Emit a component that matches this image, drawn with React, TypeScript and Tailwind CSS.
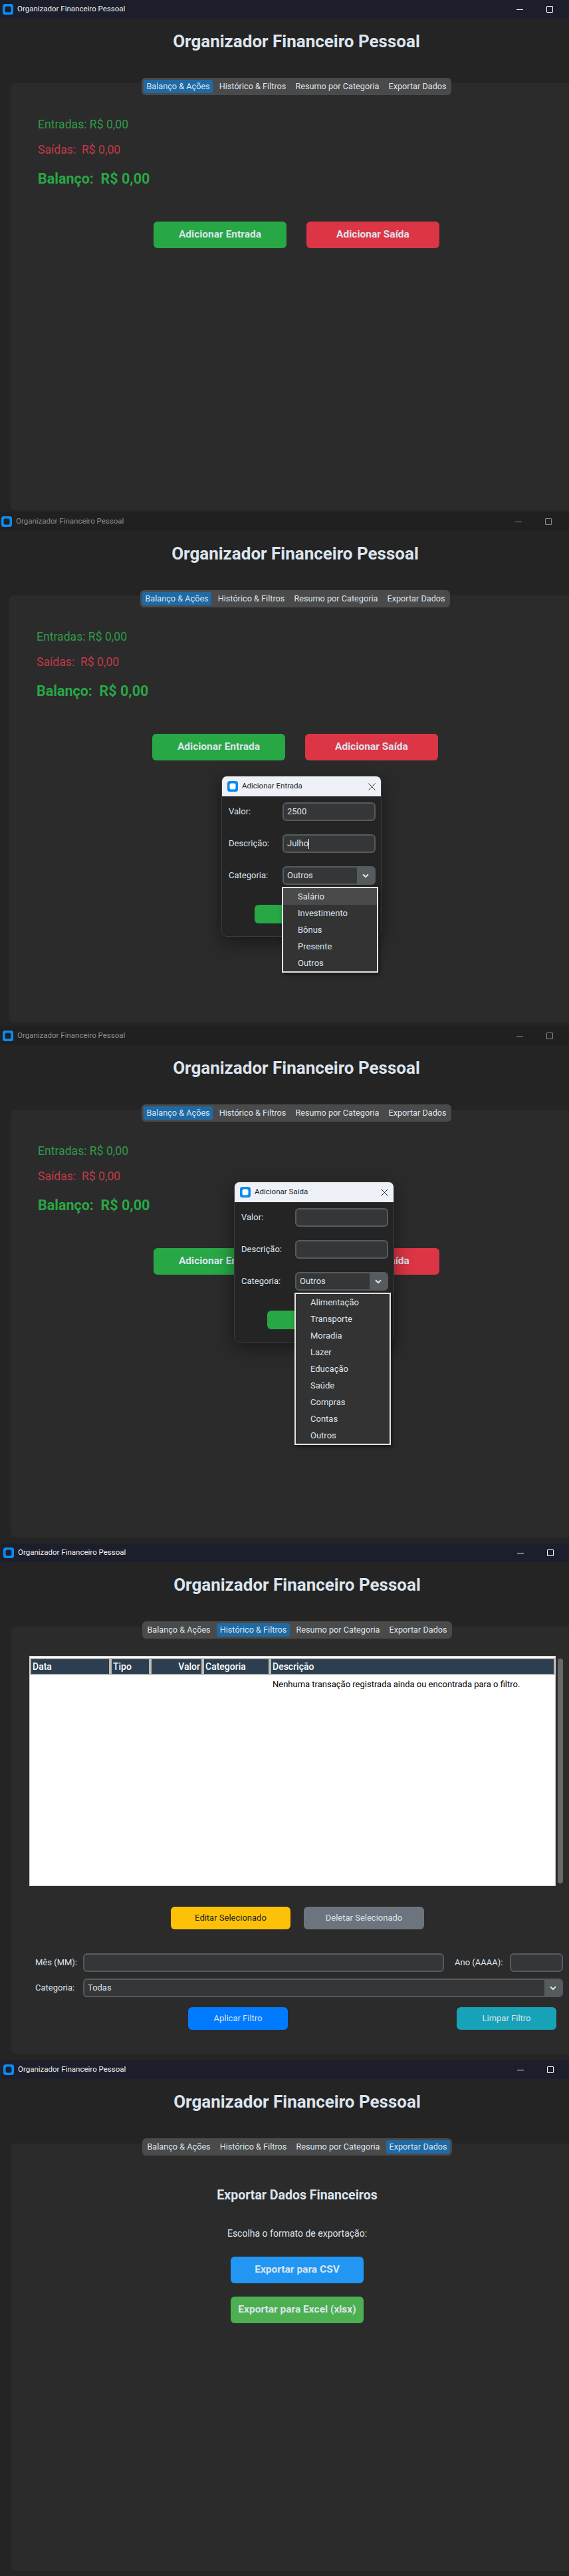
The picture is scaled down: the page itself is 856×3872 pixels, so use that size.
import type { ReactNode } from 'react';
import clsx from 'clsx';

const TABS = ['Balanço & Ações', 'Histórico & Filtros', 'Resumo por Categoria', 'Exportar Dados'];
const INCOME_CATEGORIES = ['Salário', 'Investimento', 'Bônus', 'Presente', 'Outros'];
const EXPENSE_CATEGORIES = [
  'Alimentação',
  'Transporte',
  'Moradia',
  'Lazer',
  'Educação',
  'Saúde',
  'Compras',
  'Contas',
  'Outros',
];
const COLUMNS = [
  { label: 'Data', className: '' },
  { label: 'Tipo', className: '' },
  { label: 'Valor', className: 'text-right' },
  { label: 'Categoria', className: '' },
  { label: 'Descrição', className: '' },
];

function AppIcon({ inner }: { inner: string }) {
  return (
    <svg width="16" height="16" viewBox="0 0 16 16" className="shrink-0" aria-hidden="true">
      <rect width="16" height="16" rx="3.5" fill="#0a8cf0" />
      <rect x="3.5" y="3.5" width="9" height="9" rx="2.5" fill={inner} />
    </svg>
  );
}

function TitleBar({ active }: { active: boolean }) {
  const stroke = active ? '#ffffff' : '#8a8a8a';
  return (
    <header
      className={clsx(
        'flex h-[28px] items-center pl-[4px] text-[11.5px]',
        active ? 'bg-[#1c1f2b] text-[#f2f2f2]' : 'bg-[#202020] text-[#8f8f8f]',
      )}
    >
      <AppIcon inner={active ? '#1c1f2b' : '#202020'} />
      <span className="ml-[6px]">Organizador Financeiro Pessoal</span>
      <svg width="10" height="10" viewBox="0 0 10 10" className="ml-auto" aria-hidden="true">
        <path d="M0 5.5h10" stroke={stroke} strokeWidth="1" />
      </svg>
      <svg width="10" height="10" viewBox="0 0 10 10" className="mr-[60px] ml-[35px]" aria-hidden="true">
        <rect x="0.5" y="0.5" width="9" height="9" rx="0.5" fill="none" stroke={stroke} strokeWidth="1" />
      </svg>
    </header>
  );
}

function Tabs({ active }: { active: number }) {
  return (
    <nav className="relative z-10 mx-auto mt-[39px] flex h-[26px] w-fit items-center gap-[5px] rounded-[6px] bg-[#4a4a4a] px-[3px] text-[12.7px]">
      {TABS.map((tab, index) => (
        <span
          key={tab}
          className={clsx(
            'flex h-[20px] items-center rounded-[3px] px-[4.5px]',
            index === active ? 'bg-[#1f6aa5]' : '',
          )}
        >
          {tab}
        </span>
      ))}
    </nav>
  );
}

function Screen({
  active,
  tab,
  className,
  overlay,
  children,
}: {
  active: boolean;
  tab: number;
  className: string;
  overlay?: ReactNode;
  children: ReactNode;
}) {
  return (
    <section className={clsx('relative w-[892px] shrink-0 bg-[#242424] text-[#dce4ee]', className)}>
      <TitleBar active={active} />
      <h1 className="mt-[18px] text-center text-[26px] leading-[32px] font-bold">Organizador Financeiro Pessoal</h1>
      <Tabs active={tab} />
      <main className="mx-[16px] -mt-[18px] h-[642px] rounded-[6px] bg-[#2b2b2b]">{children}</main>
      {overlay}
    </section>
  );
}

function Chevron() {
  return (
    <svg width="10" height="7" viewBox="0 0 10 7" aria-hidden="true">
      <path d="M1 1.2l4 3.8 4-3.8" fill="none" stroke="#dce4ee" strokeWidth="2" />
    </svg>
  );
}

function TextInput({ className, children }: { className: string; children?: ReactNode }) {
  return (
    <div
      className={clsx(
        'flex h-[28px] items-center rounded-[6px] border-2 border-[#565b5e] bg-[#343638] pl-[5px] text-[13px]',
        className,
      )}
    >
      {children}
    </div>
  );
}

function SelectBox({ value, className }: { value: string; className: string }) {
  return (
    <div
      className={clsx(
        'flex h-[28px] items-center overflow-hidden rounded-[6px] border-2 border-[#565b5e] bg-[#343638] text-[13px]',
        className,
      )}
    >
      <span className="flex-1 pl-[5px]">{value}</span>
      <span className="flex h-full w-[26px] items-center justify-center bg-[#565b5e]">
        <Chevron />
      </span>
    </div>
  );
}

function Field({ label, children }: { label: string; children: ReactNode }) {
  return (
    <div className="mb-[20px] flex h-[28px] items-center text-[13px]">
      <span className="w-[81px]">{label}</span>
      {children}
    </div>
  );
}

function Dialog({
  title,
  className,
  value,
  description,
  categories,
  highlight,
  menuLeft,
}: {
  title: string;
  className: string;
  value?: string;
  description?: string;
  categories: string[];
  highlight?: number;
  menuLeft: string;
}) {
  return (
    <div
      className={clsx(
        'absolute z-20 h-[242px] w-[241px] rounded-[8px] border border-[#3c3c3c] bg-[#242424] shadow-[0_8px_28px_rgba(0,0,0,0.45)]',
        className,
      )}
    >
      <div className="flex h-[30px] items-center rounded-t-[7px] bg-[#eff1f8] pl-[8px] text-[11.5px] text-[#222222]">
        <AppIcon inner="#ffffff" />
        <span className="ml-[6px] flex-1">{title}</span>
        <svg width="11" height="11" viewBox="0 0 11 11" className="mr-[8.5px]" aria-hidden="true">
          <path d="M0.5 0.5l10 10M10.5 0.5l-10 10" stroke="#222222" strokeWidth="1" />
        </svg>
      </div>
      <div className="pt-[9px] pl-[10px]">
        <Field label="Valor:">
          <TextInput className="w-[140px]">{value}</TextInput>
        </Field>
        <Field label="Descrição:">
          <TextInput className="w-[140px]">
            {description}
            {description ? <span className="h-[15px] w-px bg-white" /> : null}
          </TextInput>
        </Field>
        <Field label="Categoria:">
          <SelectBox value="Outros" className="w-[140px]" />
        </Field>
        <div className="mt-[30px] ml-[39px] h-[28px] w-[141px] rounded-[6px] bg-[#28a745]" />
      </div>
      <ul
        className={clsx(
          'absolute top-[166px] w-[145px] border-2 border-[#e4e4e4] bg-[#333333] text-[13px] shadow-[2px_3px_6px_rgba(0,0,0,0.5)]',
          menuLeft,
        )}
      >
        {categories.map((category, index) => (
          <li
            key={category}
            className={clsx('flex h-[25px] items-center pl-[22px]', index === highlight ? 'bg-[#4a4a4a]' : '')}
          >
            {category}
          </li>
        ))}
      </ul>
    </div>
  );
}

function BalancePanel() {
  return (
    <div className="pt-[50px]">
      <div className="pl-[41px]">
        <p className="text-[17.6px] leading-[24px] whitespace-pre text-[#2f9a4a]">Entradas: R$ 0,00</p>
        <p className="mt-[14px] text-[17.6px] leading-[24px] whitespace-pre text-[#c23a47]">Saídas:  R$ 0,00</p>
        <p className="mt-[17px] text-[21.5px] leading-[30px] font-bold whitespace-pre text-[#28a745]">Balanço:  R$ 0,00</p>
      </div>
      <div className="mt-[49px] flex justify-center gap-[30px]">
        <button className="h-[40px] w-[200px] rounded-[6px] bg-[#28a745] text-[15.5px] font-bold">Adicionar Entrada</button>
        <button className="h-[40px] w-[200px] rounded-[6px] bg-[#dc3545] text-[15.5px] font-bold">Adicionar Saída</button>
      </div>
    </div>
  );
}

function HistoryPanel() {
  return (
    <div className="pt-[44px] text-[13px]">
      <div className="ml-[27px] flex">
        <div className="h-[346px] w-[792px] border border-[#d4d0c8] bg-white pt-[2px]">
          <div className="grid grid-cols-[121px_60px_79px_101px_429px]">
            {COLUMNS.map((column) => (
              <div
                key={column.label}
                className={clsx(
                  'h-[26px] border-2 border-[#bdbdb5] bg-[#2c3e50] px-[2px] text-[14px] leading-[22px] font-medium text-white',
                  column.className,
                )}
              >
                {column.label}
              </div>
            ))}
            <div className="col-start-5 h-[28px] pl-[4px] leading-[28px] text-black">
              Nenhuma transação registrada ainda ou encontrada para o filtro.
            </div>
          </div>
        </div>
        <div className="mt-[4px] ml-[3px] h-[338px] w-[8px] rounded-full bg-[#696969]" />
      </div>

      <div className="mt-[31px] flex gap-[20px] pl-[240px]">
        <button className="h-[34px] w-[180px] rounded-[6px] bg-[#ffc107] text-[#212529]">Editar Selecionado</button>
        <button className="h-[34px] w-[181px] rounded-[6px] bg-[#6c757d]">Deletar Selecionado</button>
      </div>

      <div className="mt-[36px] ml-[36px] flex items-center">
        <span className="w-[72px]">Mês (MM):</span>
        <TextInput className="w-[543px]" />
        <span className="ml-[16px] w-[83px]">Ano (AAAA):</span>
        <TextInput className="w-[80px]" />
      </div>
      <div className="mt-[10px] ml-[36px] flex items-center">
        <span className="w-[72px]">Categoria:</span>
        <SelectBox value="Todas" className="w-[722px]" />
      </div>

      <div className="mt-[15px] ml-[266px] flex gap-[254px]">
        <button className="h-[34px] w-[150px] rounded-[6px] bg-[#007bff]">Aplicar Filtro</button>
        <button className="h-[34px] w-[150px] rounded-[6px] bg-[#17a2b8]">Limpar Filtro</button>
      </div>
    </div>
  );
}

function ExportPanel() {
  return (
    <div className="flex flex-col items-center pt-[64px]">
      <h2 className="text-[19.5px] leading-[28px] font-bold">Exportar Dados Financeiros</h2>
      <p className="mt-[33px] text-[14px] leading-[20px]">Escolha o formato de exportação:</p>
      <button className="mt-[25px] h-[40px] w-[200px] rounded-[6px] bg-[#2196f3] text-[15.5px] font-bold">Exportar para CSV</button>
      <button className="mt-[20px] h-[40px] w-[200px] rounded-[6px] bg-[#4caf50] text-[15.5px] font-bold">Exportar para Excel (xlsx)</button>
    </div>
  );
}

export default function App() {
  return (
    <div className="flex h-[3872px] w-[856px] flex-col overflow-hidden bg-[#242424] font-['Roboto',sans-serif]">
      <Screen active tab={0} className="h-[770px]">
        <BalancePanel />
      </Screen>
      <Screen
        active={false}
        tab={0}
        className="-ml-[2px] h-[773px]"
        overlay={
          <Dialog
            title="Adicionar Entrada"
            className="top-[396px] left-[335px]"
            value="2500"
            description="Julho"
            categories={INCOME_CATEGORIES}
            highlight={0}
            menuLeft="left-[90px]"
          />
        }
      >
        <BalancePanel />
      </Screen>
      <Screen
        active={false}
        tab={0}
        className="h-[777px]"
        overlay={
          <Dialog
            title="Adicionar Saída"
            className="top-[233px] left-[352px]"
            categories={EXPENSE_CATEGORIES}
            menuLeft="left-[90px]"
          />
        }
      >
        <BalancePanel />
      </Screen>
      <Screen active tab={1} className="ml-[1px] h-[777px]">
        <HistoryPanel />
      </Screen>
      <Screen active tab={3} className="ml-[1px] h-[775px]">
        <ExportPanel />
      </Screen>
    </div>
  );
}
